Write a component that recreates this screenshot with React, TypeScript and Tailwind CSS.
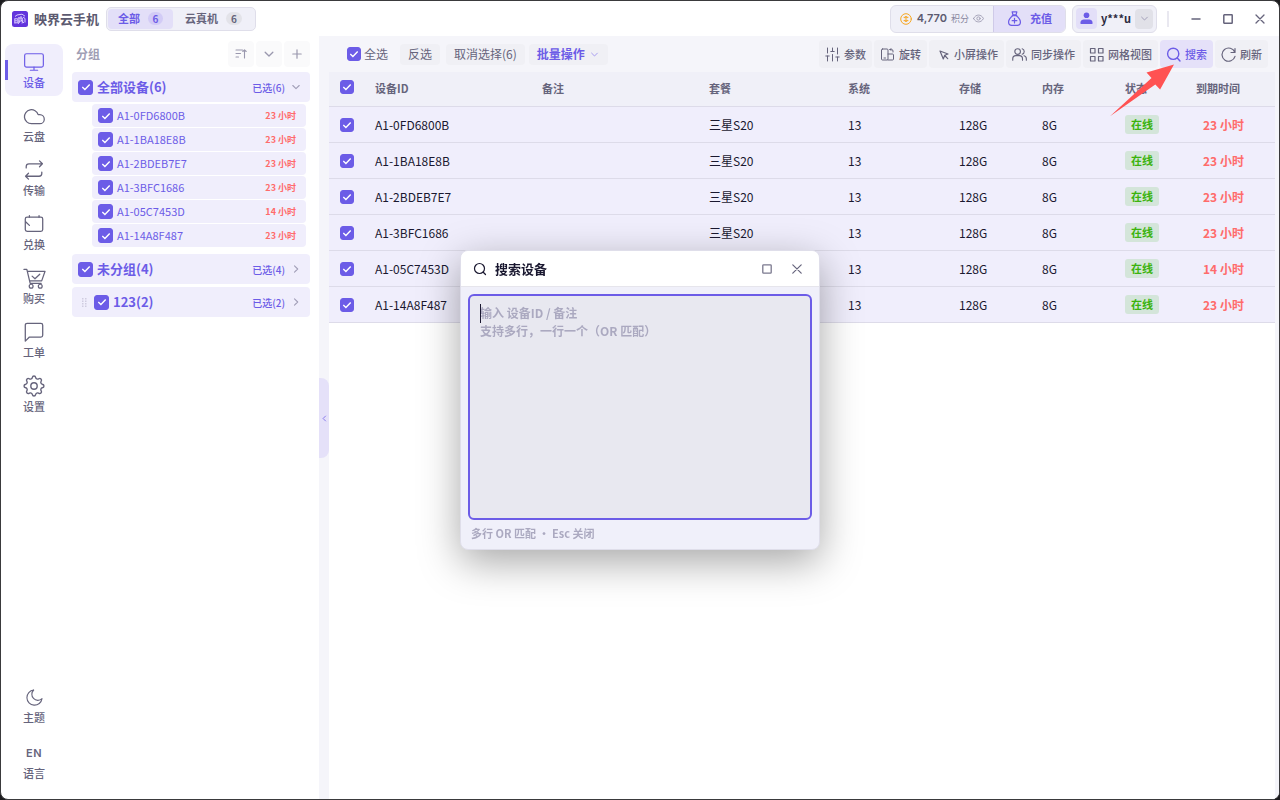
import type { ReactNode } from 'react';

const devices = [
  { id: 'A1-0FD6800B', left: '23 小时' },
  { id: 'A1-1BA18E8B', left: '23 小时' },
  { id: 'A1-2BDEB7E7', left: '23 小时' },
  { id: 'A1-3BFC1686', left: '23 小时' },
  { id: 'A1-05C7453D', left: '14 小时' },
  { id: 'A1-14A8F487', left: '23 小时' },
];

const Icon = ({ size = 16, box = 24, width = 1.5, className = '', children }: {
  size?: number; box?: number; width?: number; className?: string; children: ReactNode;
}) => (
  <svg
    width={size}
    height={size}
    viewBox={`0 0 ${box} ${box}`}
    fill="none"
    stroke="currentColor"
    strokeWidth={width}
    strokeLinecap="round"
    strokeLinejoin="round"
    className={`shrink-0 ${className}`}
    aria-hidden="true"
  >
    {children}
  </svg>
);

const Chevron = ({ dir = 'down', size = 10 }: { dir?: 'down' | 'right' | 'left'; size?: number }) => (
  <Icon size={size} box={10} width={1.1}>
    <path d={dir === 'down' ? 'M1.800 3.500 5 6.700l3.200-3.200' : dir === 'right' ? 'M3.500 1.800 6.700 5 3.500 8.200' : 'M6.500 1.500 3 5l3.500 3.500'} />
  </Icon>
);

const Check = ({ label, small = false }: { label: string; small?: boolean }) => (
  <span className="grid w-fit shrink-0 place-items-center">
    <input
      type="checkbox"
      defaultChecked
      aria-label={label}
      className={`peer col-start-1 row-start-1 appearance-none rounded-[3px] border border-[#6c5ce7] checked:bg-[#6c5ce7] ${small ? 'size-[14px]' : 'size-[15px]'}`}
    />
    <svg
      viewBox="0 0 10 10"
      fill="none"
      stroke="white"
      strokeWidth="1.4"
      className="pointer-events-none invisible col-start-1 row-start-1 size-[10px] peer-checked:visible"
      aria-hidden="true"
    >
      <path d="M1.3 5 3.9 7.4 8.7 2.4" />
    </svg>
  </span>
);

const NavItem = ({ label, active = false, children }: { label: string; active?: boolean; children: ReactNode }) => (
  <button
    type="button"
    className={`relative flex h-[52px] w-full flex-col items-center rounded-lg pt-[6px] text-[11px] leading-4 font-medium ${active ? 'bg-[#f0eefc] text-[#6c5ce7]' : 'text-[#66647c]'}`}
  >
    {active && <span className="absolute top-4 left-0 h-5 w-[3px] bg-[#6c5ce7]" />}
    <span className="grid size-6 place-items-center">{children}</span>
    {label}
  </button>
);

const ToolButton = ({ label, active = false, children, extra }: {
  label: string; active?: boolean; children: ReactNode; extra?: ReactNode;
}) => (
  <button
    type="button"
    className={`relative flex h-7 items-center gap-1 rounded px-[6px] text-[11px] font-medium whitespace-nowrap ${active ? 'bg-[#e5e1f9] text-[#6c5ce7]' : 'bg-[#f0f0f5] text-[#66647c]'}`}
  >
    {children}
    {label}
    {extra}
  </button>
);

const GroupHeader = ({ name, picked, open = false, grip = false }: {
  name: string; picked: string; open?: boolean; grip?: boolean;
}) => (
  <div className="flex h-[30px] items-center rounded bg-[#f0eefc] pr-[9px] pl-[6px]">
    {grip && (
      <svg width="16" height="10" viewBox="0 0 16 10" fill="#cfcce0" aria-hidden="true">
        <path d="M4 1h1.500v1.500H4zM7 1h1.500v1.500H7zM4 3.500h1.500V5H4zM7 3.500h1.500V5H7zM4 6h1.500v1.500H4zM7 6h1.500v1.500H7zM4 8.500h1.500V10H4zM7 8.500h1.500V10H7z" />
      </svg>
    )}
    <Check label={name} />
    <span className="ml-1 text-[13px] font-bold text-[#6c5ce7]">{name}</span>
    <span className="mr-[6px] ml-auto text-[10px] font-medium text-[#6c5ce7]">{picked}</span>
    <button type="button" aria-label="展开" className="text-[#a29fb8]">
      <Chevron dir={open ? 'down' : 'right'} />
    </button>
  </div>
);

const Header = () => (
  <header className="flex h-[35px] items-center pr-[3px] pl-[11px]">
    <svg width="16" height="16" viewBox="0 0 16 16" className="shrink-0" aria-hidden="true">
      <rect width="16" height="16" rx="2.500" fill="#6234dc" />
      <path
        d="M3 5.500 5 4l5-.8 3 2M2.800 7.500v5M2.800 7.800h3v4h-3M5 9.800H3M7 6v6M6.300 7h4v3h-4M9 5v4l3 3M11 6l2 1.500v4M8 10l-2 3M11 9.500l-1 3"
        fill="none"
        stroke="#d9caff"
        strokeWidth="1"
      />
    </svg>
    <h1 className="ml-[6px] text-[13px] font-bold text-[#5c5a70]">映界云手机</h1>
    <div className="ml-[7px] flex h-6 rounded-[5px] border border-[#dfdeea] bg-[#f0f0f8] p-px text-[11px] font-bold">
      <button type="button" className="flex items-center gap-2 rounded bg-[#e3dff8] px-[10px] text-[#6c5ce7]">
        全部
        <span className="w-[15px] rounded-full bg-[#d2cbf6] text-[10px] leading-[13px]">6</span>
      </button>
      <button type="button" className="flex items-center gap-2 rounded px-3 text-[#66647c]">
        云真机
        <span className="w-4 rounded-full bg-[#e3e3e9] text-[10px] leading-[13px]">6</span>
      </button>
    </div>

    <div className="ml-auto flex h-7 overflow-hidden rounded-[6px] border border-[#dfdeea] bg-[#f0f0f8]">
      <div className="flex items-center px-[9px]">
        <Icon size={12} box={12} width={1} className="text-[#f5a623]">
          <circle cx="6" cy="6" r="5.300" />
          <path d="M4 4.300h4M4 7.700h4M6 3.300l-1 1M6 3.300l1 1M6 8.700l-1-1M6 8.700l1-1M5.200 6h1.600" />
        </Icon>
        <span className="ml-[5px] font-['Inter'] text-[11px] font-semibold text-[#5c5a70]">4,770</span>
        <span className="ml-1 text-[9px] text-[#8a88a0]">积分</span>
        <button type="button" aria-label="隐藏积分" className="ml-1 text-[#a09eb4]">
          <Icon size={11} box={12} width={1}>
            <path d="M.6 6C2 3.300 4 2.300 6 2.300S10 3.300 11.400 6C10 8.700 8 9.700 6 9.700S2 8.700.6 6Z" />
            <circle cx="6" cy="6" r="1.800" />
          </Icon>
        </button>
      </div>
      <button type="button" className="flex items-center gap-2 border-l border-[#cfcae8] bg-[#e3dff8] px-[13px] text-[11px] font-bold text-[#6c5ce7]">
        <Icon size={15} box={16} width={1.3}>
          <path d="M5.500 1h5L9.700 4H6.300ZM5.500 5h5M6 5C3.500 7 1.700 9.300 1.700 11.700c0 2.300 1.300 3.600 3.300 3.600h6c2 0 3.300-1.300 3.300-3.600C14.300 9.300 12.500 7 10 5M8 7.800v5M5.500 10.300h5" />
        </Icon>
        充值
      </button>
    </div>

    <div className="ml-[6px] flex h-7 items-center rounded-[6px] border border-[#dfdeea] bg-[#f0f0f8] px-[3px]">
      <span className="grid size-[21px] place-items-center rounded bg-[#e3dff8] text-[#6c5ce7]">
        <svg width="13" height="13" viewBox="0 0 12 12" fill="currentColor" aria-hidden="true">
          <circle cx="6" cy="3" r="2.600" />
          <path d="M.5 11V9.500C.5 7.700 2 6.900 3.500 6.900h5c1.500 0 3 .8 3 2.600V11Z" />
        </svg>
      </span>
      <span className="ml-1 text-[11px] font-bold text-[#2c2a40]">y***u</span>
      <button type="button" aria-label="账户菜单" className="ml-1 grid h-5 w-[18px] place-items-center rounded bg-[#e1e1e8] text-[#a29fb8]">
        <Chevron size={9} />
      </button>
    </div>
    <span className="mr-[11px] ml-[10px] h-4 w-0.5 bg-[#e9e8f0]" />
    <button type="button" aria-label="最小化" className="grid h-7 w-8 place-items-center text-[#66647c]">
      <Icon size={10} box={10} width={1.5}><path d="M1 5h8" /></Icon>
    </button>
    <button type="button" aria-label="最大化" className="grid h-7 w-8 place-items-center text-[#66647c]">
      <Icon size={10} box={10} width={1.5}><rect x=".8" y=".8" width="8.400" height="8.400" rx=".5" /></Icon>
    </button>
    <button type="button" aria-label="关闭" className="grid h-7 w-8 place-items-center text-[#66647c]">
      <Icon size={10} box={10} width={1.3}><path d="m1 1 8 8M9 1 1 9" /></Icon>
    </button>
  </header>
);

const SideNav = () => (
  <nav className="flex w-[67px] shrink-0 flex-col gap-0.5 pt-2 pr-[5px] pb-3 pl-1">
    <NavItem label="设备" active>
      <Icon size={22} width={1.3}>
        <rect x="1.800" y="3" width="20.400" height="14.500" rx="2" />
        <path d="M12 17.500V21M8 21h8" />
      </Icon>
    </NavItem>
    <NavItem label="云盘">
      <Icon size={23} width={1.3}>
        <path d="M17.500 19.500H8.800A7.300 7.300 0 1 1 15.800 10.100h1.700a4.700 4.700 0 1 1 0 9.400Z" />
      </Icon>
    </NavItem>
    <NavItem label="传输">
      <Icon size={22} width={1.4}>
        <path d="m18 2 3.200 3.200L18 8.400M3.500 9.700V8.200a3 3 0 0 1 3-3h14.700M6 22l-3.200-3.200L6 15.600M20.500 14.300v1.500a3 3 0 0 1-3 3H2.800" />
      </Icon>
    </NavItem>
    <NavItem label="兑换">
      <Icon size={22} width={1.4}>
        <rect x="2.500" y="4.500" width="19" height="15.500" rx="2" />
        <path d="M7 4.500V3M17.500 4.500V3M2.800 9.500l4.200 4" />
      </Icon>
    </NavItem>
    <NavItem label="购买">
      <Icon size={23} width={1.3}>
        <path d="M1 2.500h3L7.500 17h11.500M4.500 4.500h18.500l-3.500 10H7M9.500 9.500l3 2.800 5-4.800" />
        <circle cx="8.500" cy="20" r="2" />
        <circle cx="18" cy="20" r="2" />
      </Icon>
    </NavItem>
    <NavItem label="工单">
      <Icon size={22} width={1.4}>
        <path d="M21.500 15.500a2 2 0 0 1-2 2H7l-4.500 4.500V4.500a2 2 0 0 1 2-2h15a2 2 0 0 1 2 2Z" />
      </Icon>
    </NavItem>
    <NavItem label="设置">
      <Icon size={24} width={1.4}>
        <circle cx="12" cy="12" r="3.200" />
        <path d="M10.300 3.600c.4-2.100 3-2.100 3.400 0a1.900 1.900 0 0 0 2.900 1.200c1.800-1.200 3.700.7 2.500 2.500a1.900 1.900 0 0 0 1.200 2.900c2.200.4 2.200 3.200 0 3.600a1.900 1.900 0 0 0-1.200 2.900c1.200 1.800-.7 3.700-2.500 2.500a1.900 1.900 0 0 0-2.900 1.200c-.4 2.200-3 2.200-3.400 0a1.900 1.900 0 0 0-2.900-1.200c-1.800 1.200-3.700-.7-2.500-2.500a1.900 1.900 0 0 0-1.200-2.900c-2.200-.4-2.200-3.200 0-3.600a1.900 1.900 0 0 0 1.200-2.900c-1.200-1.800.7-3.700 2.500-2.500a1.900 1.900 0 0 0 2.900-1.200Z" />
      </Icon>
    </NavItem>
    <div className="mt-auto flex flex-col gap-1">
      <NavItem label="主题">
        <Icon size={19} width={1.4}>
          <path d="M21.500 13.500A9.600 9.600 0 1 1 11 2.500a7.500 7.500 0 0 0 10.500 11Z" />
        </Icon>
      </NavItem>
      <NavItem label="语言">
        <span className="font-['Inter'] text-[11px] font-semibold tracking-wider">EN</span>
      </NavItem>
    </div>
  </nav>
);

const GroupPanel = () => (
  <aside className="w-[251px] shrink-0 pr-[9px] pl-1">
    <div className="flex h-9 items-center gap-0.5">
      <h2 className="mr-auto pl-1 text-xs font-bold text-[#a09eb4]">分组</h2>
      <button type="button" aria-label="排序" className="grid size-[26px] place-items-center rounded bg-[#fafafb] text-[#9a98ae]">
        <Icon size={12} box={12} width={1.1}>
          <path d="M1 2h6.500M1 5.500h4.500M1 9h2.500M9.500 10V2M7.800 3.500 9.500 1.800l1.700 1.700" />
        </Icon>
      </button>
      <button type="button" aria-label="折叠" className="grid size-[26px] place-items-center rounded bg-[#fafafb] text-[#9a98ae]">
        <Chevron size={12} />
      </button>
      <button type="button" aria-label="新建分组" className="grid size-[26px] place-items-center rounded bg-[#fafafb] text-[#9a98ae]">
        <Icon size={10} box={10} width={1.2}><path d="M5 .8v8.400M.8 5h8.400" /></Icon>
      </button>
    </div>
    <GroupHeader name="全部设备(6)" picked="已选(6)" open />
    <ul className="mt-0.5 mr-1 mb-[7px] ml-5 space-y-px">
      {devices.map((d) => (
        <li key={d.id} className="flex h-[23px] items-center rounded bg-[#f0eefc] pr-[10px] pl-[6px] text-[#6c5ce7]">
          <Check label={d.id} />
          <span className="ml-1 text-[11px]">{d.id}</span>
          <span className="ml-auto text-[9px] font-bold text-[#ff6b6b]">{d.left}</span>
        </li>
      ))}
    </ul>
    <div className="flex flex-col gap-[3px]">
      <GroupHeader name="未分组(4)" picked="已选(4)" />
      <GroupHeader name="123(2)" picked="已选(2)" grip />
    </div>
  </aside>
);

const Toolbar = () => (
  <div className="relative z-10 flex h-9 items-center pr-[11px] pl-7 text-xs text-[#66647c]">
    <label className="flex items-center gap-[3px]">
      <Check label="全选" small />
      全选
    </label>
    <button type="button" className="ml-3 h-[21px] rounded bg-[#f0f0f5] px-2">反选</button>
    <button type="button" className="ml-[6px] h-[21px] rounded bg-[#f0f0f5] px-2 whitespace-nowrap">取消选择(6)</button>
    <button type="button" className="ml-1 flex h-[21px] items-center gap-1 rounded bg-[#f0f0f5] px-2 font-bold text-[#6c5ce7]">
      批量操作
      <span className="px-px text-[#a79cf0]"><Chevron size={9} /></span>
    </button>
    <div className="ml-auto flex gap-0.5">
      <ToolButton label="参数">
        <Icon size={15} box={15} width={1}>
          <path d="M2.500 1v5M2.500 9v5M.8 9h3.400M7.500 1v3.500M7.500 7.500V14M5.800 4.500h3.400M12.500 1v6M12.500 10v4M10.800 10h3.400" />
        </Icon>
      </ToolButton>
      <ToolButton label="旋转">
        <Icon size={15} box={15} width={1}>
          <rect x="1.500" y="2" width="6.500" height="11" rx="1" />
          <path d="M4 11h1.500M8 7h4.500a1 1 0 0 1 1 1v4a1 1 0 0 1-1 1H8M10 2.500h1.500a1.500 1.500 0 0 1 1.500 1.500v1M10 2.500l1-1M10 2.500l1 1" />
        </Icon>
      </ToolButton>
      <ToolButton label="小屏操作">
        <Icon size={15} box={15} width={1.2}>
          <path d="m5 4 8 3-3.300 1.300L8.300 12ZM9.700 8.500l3 3.200" />
        </Icon>
      </ToolButton>
      <ToolButton label="同步操作">
        <Icon size={15} box={16} width={1.2}>
          <circle cx="6" cy="4.800" r="3" />
          <path d="M.8 14v-1.500a3.300 3.300 0 0 1 3.300-3.300h3.800a3.300 3.300 0 0 1 3.300 3.300V14M10.800 1.900a3 3 0 0 1 0 5.800M15.300 14v-1.500a3.300 3.300 0 0 0-2.500-3.200" />
        </Icon>
      </ToolButton>
      <ToolButton label="网格视图">
        <Icon size={15} box={15} width={1.2}>
          <path d="M1.500 1.500h4.500V6H1.500ZM9.500 1.500H14V6H9.500ZM1.500 9.500h4.500V14H1.500ZM9.500 9.500H14V14H9.500Z" />
        </Icon>
      </ToolButton>
      <ToolButton
        label="搜索"
        active
        extra={
          <svg width="65" height="53" viewBox="0 0 65 53" className="pointer-events-none absolute top-6 right-[38px]" aria-hidden="true">
            <path d="M64 .6 36.500 8.600l5 5.400L0 52.300 45.300 20.500l4.800 5Z" fill="#ff5252" />
          </svg>
        }
      >
        <Icon size={15} box={15} width={1.4}>
          <circle cx="7.200" cy="6.800" r="5.600" />
          <path d="m11.300 11 2.700 3" />
        </Icon>
      </ToolButton>
      <ToolButton label="刷新">
        <Icon size={15} box={15} width={1.2}>
          <path d="M14 1.500V5.500h-4M13.800 5.300A6.600 6.600 0 1 0 14 9.300" />
        </Icon>
      </ToolButton>
    </div>
  </div>
);

const DeviceTable = () => (
  <table className="w-full table-fixed border-collapse text-left text-xs text-[#1a1830]">
    <colgroup>
      <col className="w-9" />
      <col className="w-[167px]" />
      <col className="w-[167px]" />
      <col className="w-[139px]" />
      <col className="w-[111px]" />
      <col className="w-[83px]" />
      <col className="w-[83px]" />
      <col className="w-[71px]" />
      <col className="w-[89px]" />
    </colgroup>
    <thead>
      <tr className="h-[34px] border-b border-[#dddbe9] bg-[#f0f0f8] text-[11px] text-[#66647c]">
        <th className="pb-1 pl-[11px]"><Check label="选择全部设备" small /></th>
        <th className="px-[10px] font-bold">设备ID</th>
        <th className="px-[10px] font-bold">备注</th>
        <th className="px-[10px] font-bold">套餐</th>
        <th className="px-[10px] font-bold">系统</th>
        <th className="px-[10px] font-bold">存储</th>
        <th className="px-[10px] font-bold">内存</th>
        <th className="px-[10px] font-bold">状态</th>
        <th className="px-[10px] font-bold">到期时间</th>
      </tr>
    </thead>
    <tbody>
      {devices.map((d) => (
        <tr key={d.id} className="h-9 border-b border-[#dddbe9] bg-[#f0eefc]">
          <td className="pt-0.5 pl-[11px]"><Check label={d.id} small /></td>
          <td className="px-[10px] pt-0.5">{d.id}</td>
          <td />
          <td className="px-[10px] pt-0.5">三星S20</td>
          <td className="px-[10px] pt-0.5">13</td>
          <td className="px-[10px] pt-0.5">128G</td>
          <td className="px-[10px] pt-0.5">8G</td>
          <td className="px-[10px]">
            <span className="block w-[34px] rounded-[3px] bg-[#d4e5da] text-center text-[11px] leading-[19px] font-bold text-[#3bb30d]">在线</span>
          </td>
          <td className="pt-0.5 pl-[17px] font-bold text-[#ff6b6b]">{d.left}</td>
        </tr>
      ))}
    </tbody>
  </table>
);

const SearchDialog = () => (
  <div className="pointer-events-none fixed inset-0 z-20 grid place-items-center">
    <section
      role="dialog"
      aria-labelledby="search-title"
      className="pointer-events-auto w-[360px] overflow-hidden rounded-lg border border-[#dfdeea] bg-[#f0f0fa] shadow-[0_12px_40px_rgba(0,0,0,0.35)]"
    >
      <header className="flex h-9 items-center border-b border-[#e6e5ec] bg-white pr-[7px] pl-3 text-[#1a1830]">
        <Icon size={14} box={14} width={1.2}>
          <circle cx="6.500" cy="6.500" r="5" />
          <path d="m10.500 10.500 2 2" />
        </Icon>
        <h2 id="search-title" className="mr-auto ml-2 text-[13px] font-bold">搜索设备</h2>
        <button type="button" aria-label="最大化" className="grid h-7 w-[30px] place-items-center text-[#7a788e]">
          <Icon size={10} box={10} width={1.3}><rect x=".8" y=".8" width="8.400" height="8.400" rx=".8" /></Icon>
        </button>
        <button type="button" aria-label="关闭" className="grid h-7 w-[30px] place-items-center text-[#66647c]">
          <Icon size={10} box={10} width={1.2}><path d="m.8.8 8.400 8.400M9.200.8.8 9.200" /></Icon>
        </button>
      </header>
      <div className="relative px-[7px] pt-[7px]">
        <textarea
          aria-label="搜索设备"
          placeholder={'输入 设备ID / 备注\n支持多行，一行一个（OR 匹配）'}
          className="block h-[226px] w-full resize-none rounded-[6px] border-2 border-[#6c5ce7] bg-[#e8e8f0] px-[10px] py-2 text-xs leading-[18px] font-bold outline-none placeholder:text-[#aba9c0]"
        />
        <span className="absolute top-[17px] left-[19px] h-[19px] w-px bg-[#1a1830]" />
      </div>
      <p className="px-[10px] pt-1 pb-[7px] text-[11px] leading-[18px] font-bold text-[#aba9c0]">多行 OR 匹配 · Esc 关闭</p>
    </section>
  </div>
);

const App = () => {
  return (
    <div className="flex min-h-screen bg-[#1c1c1e] font-['Noto_Sans_CJK_SC',sans-serif]">
      <div className="flex flex-1 flex-col overflow-hidden rounded-lg border border-[#3a3a3c] bg-white">
        <Header />
        <div className="flex flex-1">
          <SideNav />
          <GroupPanel />
          <main className="flex min-w-0 flex-1 flex-col bg-[#f5f5fa]">
            <Toolbar />
            <div className="flex flex-1 pr-1">
              <div className="flex w-[10px] shrink-0 items-center">
                <button type="button" aria-label="收起分组" className="mb-[35px] grid h-20 w-full place-items-center rounded-r-lg bg-[#e5e1f9] text-[#6c5ce7]">
                  <Chevron dir="left" size={7} />
                </button>
              </div>
              <div className="min-w-0 flex-1 bg-white">
                <DeviceTable />
              </div>
            </div>
          </main>
        </div>
      </div>
      <SearchDialog />
    </div>
  );
};

export default App;
